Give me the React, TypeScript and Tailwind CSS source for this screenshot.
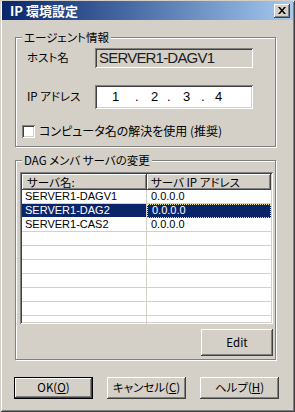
import type { ReactNode } from 'react'

const jp = "font-['Noto_Sans_CJK_JP','Liberation_Sans',sans-serif] [font-feature-settings:'palt']"
const latin = "font-['Liberation_Sans','Noto_Sans_CJK_JP',sans-serif]"

const raised =
  'bg-[#d4d0c8] shadow-[inset_-1px_-1px_0_#404040,inset_1px_1px_0_#ffffff,inset_-2px_-2px_0_#808080,inset_2px_2px_0_#d4d0c8]'
const sunken =
  'shadow-[inset_1px_1px_0_#808080,inset_-1px_-1px_0_#ffffff,inset_2px_2px_0_#404040,inset_-2px_-2px_0_#d4d0c8]'

const servers = [
  { name: 'SERVER1-DAGV1', ip: '0.0.0.0' },
  { name: 'SERVER1-DAG2', ip: '0.0.0.0', selected: true },
  { name: 'SERVER1-CAS2', ip: '0.0.0.0' },
]

function GroupBox({ title, className, children }: { title: string; className: string; children: ReactNode }) {
  return (
    <div
      className={`relative w-[261px] border border-[#808080] shadow-[inset_1px_1px_0_#ffffff,1px_1px_0_#ffffff] ${className}`}
    >
      <span className={`absolute -top-[8px] left-[6px] bg-[#d4d0c8] px-[2px] text-[11.5px] leading-[14px] text-black ${jp}`}>
        {title}
      </span>
      {children}
    </div>
  )
}

function Button({ children, isDefault, className }: { children: ReactNode; isDefault?: boolean; className: string }) {
  if (isDefault) {
    return (
      <div className={`border border-black ${className}`}>
        <div className={`flex h-full items-center justify-center text-[11.5px] text-black ${raised} ${jp}`}>{children}</div>
      </div>
    )
  }
  return (
    <div className={`flex items-center justify-center text-[11.5px] text-black ${raised} ${jp} ${className}`}>{children}</div>
  )
}

function App() {
  const emptyRows = Array.from({ length: 7 })

  return (
    <div className="relative h-[412px] w-[295px] overflow-hidden bg-[#d4d0c8] shadow-[inset_1px_1px_0_#d4d0c8,inset_-1px_-1px_0_#404040,inset_2px_2px_0_#ffffff,inset_-2px_-2px_0_#808080]">
      <div className="mx-[2px] mt-[1px] flex h-[19px] items-center justify-between bg-gradient-to-r from-[#0a246a] to-[#a6caf0] pl-[8px] pr-[3px]">
        <span className={`text-[13px] font-bold leading-none text-white ${jp}`}>IP 環境設定</span>
        <div className={`flex h-[14px] w-[16px] items-center justify-center ${raised}`}>
          <svg width="8" height="7" viewBox="0 0 8 7">
            <path d="M0 0h2l2 2.5L6 0h2L5 3.5 8 7H6L4 4.5 2 7H0l3-3.5z" fill="#000" />
          </svg>
        </div>
      </div>

      <div className="flex flex-col pl-[15px]">
        <GroupBox title="エージェント情報" className="mt-[17px] h-[110px] pl-[11px] pt-[10px]">
          <div className="flex items-center">
            <span className={`w-[68px] text-[11.5px] text-black ${jp}`}>ホスト名</span>
            <div className={`flex h-[20px] w-[158px] items-center pl-[4px] ${sunken}`}>
              <span className={`text-[15px] tracking-[-0.8px] text-[#202020] ${latin}`}>SERVER1-DAGV1</span>
            </div>
          </div>
          <div className="mt-[17px] flex items-center">
            <span className={`w-[68px] text-[11.5px] text-black ${jp}`}>IP アドレス</span>
            <div className={`flex h-[24px] w-[158px] items-center bg-white pl-[17px] text-[13px] text-black ${sunken} ${latin}`}>
              <span className="w-[23px]">1</span>
              <span className="w-[16px]">.</span>
              <span className="w-[16px]">2</span>
              <span className="w-[16px]">.</span>
              <span className="w-[18px]">3</span>
              <span className="w-[14px]">.</span>
              <span>4</span>
            </div>
          </div>
          <div className="-ml-[5px] mt-[13px] flex items-center">
            <div className={`h-[13px] w-[13px] bg-white ${sunken}`} />
            <span className={`ml-[4px] text-[12px] text-black ${jp}`}>コンピュータ名の解決を使用 (推奨)</span>
          </div>
        </GroupBox>

        <GroupBox title="DAG メンバ サーバの変更" className="mt-[13px] h-[200px] pl-[4px] pt-[11px]">
          <div className={`h-[152px] w-[253px] overflow-hidden bg-white p-[2px] ${sunken}`}>
            <div className={`flex h-[16px] text-[11.5px] leading-[16px] text-black ${jp}`}>
              <div className={`w-[125px] pl-[5px] ${raised}`}>サーバ名:</div>
              <div className={`flex-1 pl-[4px] ${raised}`}>サーバ IP アドレス</div>
            </div>
            {servers.map((server) => (
              <div key={server.name} className={`flex h-[14px] text-[11px] leading-[13px] ${latin}`}>
                <div
                  className={`w-[125px] border-b border-r border-[#d4d0c8] pl-[3px] ${
                    server.selected ? 'border-b-white bg-[#0a246a] text-white' : 'text-black'
                  }`}
                >
                  {server.name}
                </div>
                <div
                  className={`flex-1 pl-[4px] ${
                    server.selected
                      ? 'border border-dotted border-[#e8e4a8] bg-[#0a246a] leading-[11px] text-white'
                      : 'border-b border-[#d4d0c8] text-black'
                  }`}
                >
                  {server.ip}
                </div>
              </div>
            ))}
            {emptyRows.map((_, index) => (
              <div key={index} className="flex h-[14px]">
                <div className="w-[125px] border-b border-r border-[#d4d0c8]" />
                <div className="flex-1 border-b border-[#d4d0c8]" />
              </div>
            ))}
          </div>
          <div className="flex w-[253px] justify-end">
            <Button className={`mt-[5px] h-[27px] w-[72px] ${latin}`}>Edit</Button>
          </div>
        </GroupBox>
      </div>

      <div className="mt-[17px] flex gap-[14px] pl-[14px]">
        <Button isDefault className="h-[22px] w-[79px]">
          OK(<u>O</u>)
        </Button>
        <Button className="h-[22px] w-[79px]">
          キャンセル(<u>C</u>)
        </Button>
        <Button className="h-[22px] w-[79px]">
          ヘルプ(<u>H</u>)
        </Button>
      </div>
    </div>
  )
}

export default App
